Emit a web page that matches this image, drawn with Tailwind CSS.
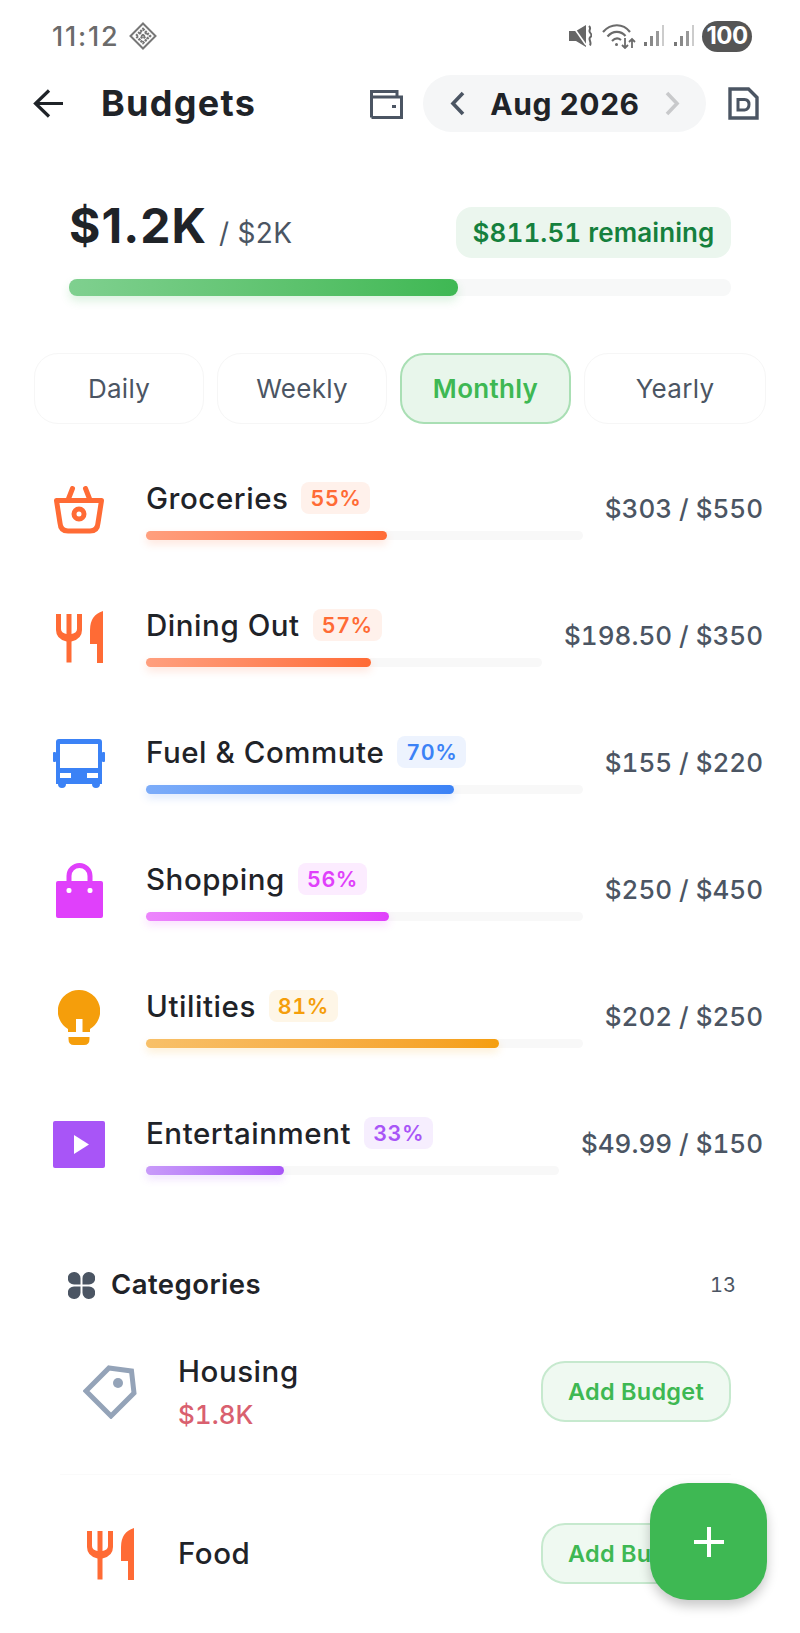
<!DOCTYPE html>
<html lang="en">
<head>
    <meta charset="UTF-8">
    <meta name="viewport" content="width=device-width, initial-scale=1.0">
    <title>Budgets</title>
    <script src="https://cdn.jsdelivr.net/npm/@tailwindcss/browser@4"></script>
</head>
<body class="bg-white font-[Inter,sans-serif] text-[#1f2328]">
<div class="relative w-[800px] h-[1633px] overflow-hidden">

    <!-- status bar -->
    <div class="h-[72px] flex items-center pl-[52px] pr-[48px]">
        <span class="text-[27px] font-medium text-[#6b6b6b] leading-none tracking-[1.8px]">11:12</span>
        <svg class="ml-[10px] w-[28px] h-[28px]" viewBox="0 0 28 28" fill="none" stroke="#777" stroke-width="2">
            <path d="M14 1.500 26.500 14 14 26.500 1.500 14z"/>
            <path d="M14 7 21 14 14 21 7 14z M10.500 10.500 17.500 17.500 M17.500 10.500 10.500 17.500" stroke-width="2.500" stroke-dasharray="2 1"/>
        </svg>
        <div class="ml-auto flex items-center">
            <svg class="w-[23px] h-[22px]" viewBox="0 0 23 22" fill="#666">
                <path d="M0 6H7L17 0V22L7 16H0z"/>
                <path d="M3 0 17 20" stroke="#fff" stroke-width="1.600"/>
                <path d="M20 1c3 3-1 4 1 6.500s2 3 0 5 2 4 0 8" fill="none" stroke="#666" stroke-width="2"/>
            </svg>
            <svg class="ml-[10px] w-[34px] h-[25px]" viewBox="0 0 34 25" fill="none" stroke="#6b6b6b" stroke-width="2.200">
                <path d="M1 8C9 -1 21 -1 28 8"/>
                <path d="M5.500 12.500C11 6.500 18.500 6.500 23.500 12"/>
                <path d="M10 17C13 14 16.500 14 19 16"/>
                <circle cx="14.500" cy="20.500" r="1.500" fill="#6b6b6b" stroke="none"/>
                <path d="M23 14v10M20 21l3 3 3-3M30 24V15M27 18l3-3 3 3" stroke-width="1.800"/>
            </svg>
            <svg class="ml-[7px] w-[21px] h-[22px]" viewBox="0 0 21 22">
                <rect x="1" y="17" width="3" height="4" fill="#777"/>
                <rect x="7" y="11" width="3" height="10" fill="#888"/>
                <rect x="13" y="6" width="3" height="15" fill="#999"/>
                <rect x="19" y="0" width="2" height="21" fill="#ccc"/>
            </svg>
            <svg class="ml-[9px] w-[21px] h-[22px]" viewBox="0 0 21 22">
                <rect x="1" y="17" width="3" height="4" fill="#777"/>
                <rect x="7" y="11" width="3" height="10" fill="#888"/>
                <rect x="13" y="6" width="3" height="15" fill="#999"/>
                <rect x="19" y="0" width="2" height="21" fill="#ccc"/>
            </svg>
            <div class="ml-[8px] w-[50px] h-[31px] rounded-full bg-[#555] text-white text-[24px] font-bold leading-none flex items-center justify-center tracking-[-0.5px]">100</div>
        </div>
    </div>

    <!-- app bar -->
    <div class="h-[57px] mt-[3px] flex items-center pl-[33px] pr-[41px]">
        <svg class="w-[31px] h-[29px]" viewBox="0 0 31 29" fill="none" stroke="#1f2328" stroke-width="3.200">
            <path d="M30 14.500H3M16 1.500 2.500 14.500 16 27.500"/>
        </svg>
        <h1 class="ml-[37px] pb-[2px] text-[36px] font-bold leading-none tracking-[1.3px]">Budgets</h1>
        <svg class="ml-auto w-[33px] h-[30px]" viewBox="0 0 33 30" fill="none" stroke="#4b5563" stroke-width="3">
            <path d="M1.500 28.500V2.500H27V8M1.500 8H31.500V28.500H1.500"/>
            <rect x="22" y="16" width="4" height="3" fill="#4b5563" stroke="none"/>
        </svg>
        <div class="ml-[20px] w-[283px] h-[57px] rounded-full bg-[#f5f6f7] flex items-center pl-[27px] pr-[26px]">
            <svg class="w-[15px] h-[25px]" viewBox="0 0 15 25" fill="none" stroke="#4b5563" stroke-width="3.600">
                <path d="M13 2 3 12.500 13 23"/>
            </svg>
            <span class="mx-auto text-[30px] font-bold leading-none tracking-[0.6px]">Aug 2026</span>
            <svg class="w-[15px] h-[25px]" viewBox="0 0 15 25" fill="none" stroke="#c8c9cb" stroke-width="3.600">
                <path d="M2 2 12 12.500 2 23"/>
            </svg>
        </div>
        <svg class="ml-[22px] w-[31px] h-[33px]" viewBox="0 0 31 33" fill="none" stroke="#4b5563" stroke-width="3.400">
            <path d="M2 2H20.500L29 10.500V31H2z"/>
            <path d="M10 12.500H16.500Q21 12.500 21 17.500T16.500 23H10z" stroke-width="3"/>
        </svg>
    </div>

    <!-- summary -->
    <div class="mt-[75px] mx-[69px]">
        <div class="h-[51px] flex items-center justify-between">
            <div class="flex items-baseline pb-[13px]">
                <span class="text-[48px] font-bold leading-none tracking-[1px]">$1.2K</span>
                <span class="ml-[12px] text-[28px] text-[#4b5563] leading-none tracking-[0.3px]">/ $2K</span>
            </div>
            <div class="w-[275px] h-[51px] rounded-[16px] bg-[#ebf6ee] text-[#15803d] text-[26px] font-semibold tabular-nums flex items-center justify-center tracking-[0.1px]">$811.51 remaining</div>
        </div>
        <div class="mt-[21px] h-[17px] rounded-[8px] bg-[#f7f8f8]">
            <div class="w-[58.7%] h-full rounded-[8px] bg-linear-to-r from-[#7fd08f] to-[#3eb853] shadow-[0_5px_10px_rgba(62,184,83,0.18)]"></div>
        </div>
    </div>

    <!-- period tabs -->
    <div class="mt-[57px] ml-[34px] flex gap-[13px] text-[26px] text-[#4b5563] tracking-[0.3px]">
        <div class="w-[170px] h-[71px] rounded-[24px] border border-[#f6f6f6] flex items-center justify-center">Daily</div>
        <div class="w-[170px] h-[71px] rounded-[24px] border border-[#f6f6f6] flex items-center justify-center">Weekly</div>
        <div class="w-[171px] h-[71px] rounded-[24px] border-2 border-[#a9dfb4] bg-[#e8f6eb] text-[#3eb853] font-semibold flex items-center justify-center">Monthly</div>
        <div class="w-[182px] h-[71px] rounded-[24px] border border-[#f6f6f6] flex items-center justify-center">Yearly</div>
    </div>

    <!-- budgets -->
    <div class="mt-[58px] ml-[53px] mr-[37px] flex flex-col gap-[69px]">

        <div class="h-[58px] flex">
            <div class="w-[93px] pb-[3px] flex items-center">
                <svg class="w-[52px] h-[48px]" viewBox="0 0 52 48" fill="none" stroke="#ff6b35" stroke-width="5" stroke-linecap="round" stroke-linejoin="round">
                    <path d="M3.500 14.500H48.500L45 37Q44.500 45 37 45H15Q7.500 45 7 37Z"/>
                    <path d="M19.500 2.500 15 14M32.500 2.500 37 14"/>
                    <circle cx="26" cy="28" r="5"/>
                </svg>
            </div>
            <div class="flex-1 flex flex-col justify-between">
                <div class="flex items-center">
                    <span class="pt-[2px] text-[29.5px] font-medium leading-none tracking-[0.55px]">Groceries</span>
                    <span class="ml-[13px] w-[69px] h-[32px] rounded-[8px] bg-[#fff1eb] text-[#ff6b35] text-[21.5px] font-semibold tabular-nums tracking-[0.5px] flex items-center justify-center">55%</span>
                </div>
                <div class="h-[9px] rounded-full bg-[#f8f8f8]">
                    <div class="w-[55.1%] h-full rounded-full bg-linear-to-r from-[#ff9f7e] to-[#ff6b35] shadow-[0_4px_8px_rgba(255,107,53,0.18)]"></div>
                </div>
            </div>
            <div class="ml-[22px] pb-[6px] flex items-center text-[26px] font-medium text-[#4b5563] tabular-nums">$303 / $550</div>
        </div>

        <div class="h-[58px] flex">
            <div class="w-[93px] pb-[3px] flex items-center">
                <svg class="ml-[3px] w-[47px] h-[52px]" viewBox="0 0 47 52" fill="#ff6b35">
                    <path d="M0 3h5v15q0 4 5.500 5v-20h5v20q5.500-1 5.500-5v-15h5v16q0 9-10.500 11.500v21h-5v-21q-10.500-2.500-10.500-11.500z"/>
                    <path d="M47 0V52H41V33H34V19Q34 4 47 0z"/>
                </svg>
            </div>
            <div class="flex-1 flex flex-col justify-between">
                <div class="flex items-center">
                    <span class="pt-[2px] text-[29.5px] font-medium leading-none tracking-[0.55px]">Dining Out</span>
                    <span class="ml-[13px] w-[69px] h-[32px] rounded-[8px] bg-[#fff1eb] text-[#ff6b35] text-[21.5px] font-semibold tabular-nums tracking-[0.5px] flex items-center justify-center">57%</span>
                </div>
                <div class="h-[9px] rounded-full bg-[#f8f8f8]">
                    <div class="w-[56.7%] h-full rounded-full bg-linear-to-r from-[#ff9f7e] to-[#ff6b35] shadow-[0_4px_8px_rgba(255,107,53,0.18)]"></div>
                </div>
            </div>
            <div class="ml-[22px] pb-[6px] flex items-center text-[26px] font-medium text-[#4b5563] tabular-nums">$198.50 / $350</div>
        </div>

        <div class="h-[58px] flex">
            <div class="w-[93px] pb-[3px] flex items-center">
                <svg class="w-[52px] h-[49px]" viewBox="0 0 52 49" fill="#3b82f6">
                    <path fill-rule="evenodd" d="M6 0H46Q49 0 49 3V45H3V3Q3 0 6 0zM7 5V29H45V5zM7 34V39H18V34zM34 34V39H45V34z"/>
                    <rect x="0" y="13" width="3" height="10" rx="1"/>
                    <rect x="49" y="13" width="3" height="10" rx="1"/>
                    <path d="M5 43H13V45A4 4 0 0 1 5 45zM39 43H47V45A4 4 0 0 1 39 45z"/>
                </svg>
            </div>
            <div class="flex-1 flex flex-col justify-between">
                <div class="flex items-center">
                    <span class="pt-[2px] text-[29.5px] font-medium leading-none tracking-[0.55px]">Fuel &amp; Commute</span>
                    <span class="ml-[13px] w-[69px] h-[32px] rounded-[8px] bg-[#edf3fe] text-[#3b82f6] text-[21.5px] font-semibold tabular-nums tracking-[0.5px] flex items-center justify-center">70%</span>
                </div>
                <div class="h-[9px] rounded-full bg-[#f8f8f8]">
                    <div class="w-[70.5%] h-full rounded-full bg-linear-to-r from-[#7cacf9] to-[#3b82f6] shadow-[0_4px_8px_rgba(59,130,246,0.18)]"></div>
                </div>
            </div>
            <div class="ml-[22px] pb-[6px] flex items-center text-[26px] font-medium text-[#4b5563] tabular-nums">$155 / $220</div>
        </div>

        <div class="h-[58px] flex">
            <div class="w-[93px] pb-[3px] flex items-center">
                <svg class="ml-[3px] w-[47px] h-[55px]" viewBox="0 0 47 55" fill="#e040fb">
                    <path d="M2 18H45Q47 18 47 20V53Q47 55 45 55H2Q0 55 0 53V20Q0 18 2 18z"/>
                    <path d="M13 20V13A10.500 10.500 0 0 1 34 13V20" fill="none" stroke="#e040fb" stroke-width="5"/>
                    <rect x="10.500" y="25" width="5" height="5" rx="2" fill="#fff"/>
                    <rect x="31.500" y="25" width="5" height="5" rx="2" fill="#fff"/>
                </svg>
            </div>
            <div class="flex-1 flex flex-col justify-between">
                <div class="flex items-center">
                    <span class="pt-[2px] text-[29.5px] font-medium leading-none tracking-[0.55px]">Shopping</span>
                    <span class="ml-[13px] w-[69px] h-[32px] rounded-[8px] bg-[#fcecff] text-[#e040fb] text-[21.5px] font-semibold tabular-nums tracking-[0.5px] flex items-center justify-center">56%</span>
                </div>
                <div class="h-[9px] rounded-full bg-[#f8f8f8]">
                    <div class="w-[55.6%] h-full rounded-full bg-linear-to-r from-[#ec85fc] to-[#e040fb] shadow-[0_4px_8px_rgba(224,64,251,0.18)]"></div>
                </div>
            </div>
            <div class="ml-[22px] pb-[6px] flex items-center text-[26px] font-medium text-[#4b5563] tabular-nums">$250 / $450</div>
        </div>

        <div class="h-[58px] flex">
            <div class="w-[93px] pb-[3px] flex items-center">
                <svg class="ml-[5px] w-[42px] h-[55px]" viewBox="0 0 42 55" fill="#f59e0b">
                    <path d="M21 0A21 21 0 0 1 32 39V42H10V39A21 21 0 0 1 21 0z"/>
                    <rect x="18" y="29" width="6.500" height="13" fill="#fff"/>
                    <path d="M10.500 47H31.500V49Q31.500 55 26 55H16Q10.500 55 10.500 49z"/>
                </svg>
            </div>
            <div class="flex-1 flex flex-col justify-between">
                <div class="flex items-center">
                    <span class="pt-[2px] text-[29.5px] font-medium leading-none tracking-[0.55px]">Utilities</span>
                    <span class="ml-[13px] w-[69px] h-[32px] rounded-[8px] bg-[#fef6e7] text-[#f59e0b] text-[21.5px] font-semibold tabular-nums tracking-[0.5px] flex items-center justify-center">81%</span>
                </div>
                <div class="h-[9px] rounded-full bg-[#f8f8f8]">
                    <div class="w-[80.8%] h-full rounded-full bg-linear-to-r from-[#f8c068] to-[#f59e0b] shadow-[0_4px_8px_rgba(245,158,11,0.18)]"></div>
                </div>
            </div>
            <div class="ml-[22px] pb-[6px] flex items-center text-[26px] font-medium text-[#4b5563] tabular-nums">$202 / $250</div>
        </div>

        <div class="h-[58px] flex">
            <div class="w-[93px] pb-[3px] flex items-center">
                <svg class="w-[52px] h-[47px]" viewBox="0 0 52 47" fill="#a855f7">
                    <rect width="52" height="47" rx="2"/>
                    <path d="M21 14V33L36 23.500z" fill="#fff"/>
                </svg>
            </div>
            <div class="flex-1 flex flex-col justify-between">
                <div class="flex items-center">
                    <span class="pt-[2px] text-[29.5px] font-medium leading-none tracking-[0.55px]">Entertainment</span>
                    <span class="ml-[13px] w-[69px] h-[32px] rounded-[8px] bg-[#f6eefe] text-[#a855f7] text-[21.5px] font-semibold tabular-nums tracking-[0.5px] flex items-center justify-center">33%</span>
                </div>
                <div class="h-[9px] rounded-full bg-[#f8f8f8]">
                    <div class="w-[33.3%] h-full rounded-full bg-linear-to-r from-[#c89af9] to-[#a855f7] shadow-[0_4px_8px_rgba(168,85,247,0.18)]"></div>
                </div>
            </div>
            <div class="ml-[22px] pb-[6px] flex items-center text-[26px] font-medium text-[#4b5563] tabular-nums">$49.99 / $150</div>
        </div>
    </div>

    <!-- categories -->
    <div class="mt-[97px] ml-[68px] mr-[64px] h-[26px] flex items-center">
        <svg class="w-[27px] h-[27px]" viewBox="0 0 27 27" fill="#4b5563">
            <path d="M6 0A6.250 6.250 0 0 1 12.500 6.250V12.500H6A6.250 6.250 0 0 1 6 0z"/>
            <path d="M21 0A6.250 6.250 0 0 0 14.500 6.250V12.500H21A6.250 6.250 0 0 0 21 0z"/>
            <path d="M6 27A6.250 6.250 0 0 0 12.500 20.750V14.500H6A6.250 6.250 0 0 0 6 27z"/>
            <path d="M21 27A6.250 6.250 0 0 1 14.500 20.750V14.500H21A6.250 6.250 0 0 1 21 27z"/>
        </svg>
        <span class="ml-[16px] text-[27.5px] font-semibold leading-none tracking-[0.45px]">Categories</span>
        <span class="ml-auto text-[20px] text-[#4b5563] leading-none tabular-nums">13</span>
    </div>

    <div class="mt-[63px] ml-[60px] mr-[69px]">
        <div class="h-[114px] border-b border-[#fafafa] flex items-start">
            <svg class="ml-[23px] mt-[4px] w-[54px] h-[54px]" viewBox="0 0 54 54" fill="none" stroke="#94a3b8" stroke-width="5">
                <path d="M26 3 48.500 6 51 28 28 51 3 26z"/>
                <circle cx="35" cy="18" r="5" fill="#94a3b8" stroke="none"/>
            </svg>
            <div class="ml-[41px] flex-1">
                <div class="text-[29.5px] font-medium leading-none -mt-[4px] tracking-[0.55px]">Housing</div>
                <div class="mt-[15px] text-[26px] font-medium leading-none text-[#d9606f] tabular-nums">$1.8K</div>
            </div>
            <button class="w-[190px] h-[61px] rounded-[24px] border-2 border-[#c6e9ce] bg-[#eff9f1] text-[#3eb853] text-[23.5px] font-semibold tracking-[0.25px]">Add Budget</button>
        </div>
        <div class="mt-[48px] h-[61px] flex items-center">
            <svg class="ml-[27px] w-[47px] h-[52px]" viewBox="0 0 47 52" fill="#ff6b35">
                <path d="M0 3h5v15q0 4 5.500 5v-20h5v20q5.500-1 5.500-5v-15h5v16q0 9-10.500 11.500v21h-5v-21q-10.500-2.500-10.500-11.500z"/>
                <path d="M47 0V52H41V33H34V19Q34 4 47 0z"/>
            </svg>
            <div class="ml-[44px] flex-1 text-[29.5px] font-medium leading-none tracking-[0.55px]">Food</div>
            <button class="w-[190px] h-[61px] rounded-[24px] border-2 border-[#c6e9ce] bg-[#eff9f1] text-[#3eb853] text-[23.5px] font-semibold tracking-[0.25px]">Add Budget</button>
        </div>
    </div>

    <!-- add button -->
    <button class="absolute left-[650px] top-[1483px] w-[117px] h-[117px] rounded-[38px] bg-[#3eb853] shadow-[0_6px_12px_rgba(0,0,0,0.22)] flex items-center justify-center">
        <svg class="w-[30px] h-[30px]" viewBox="0 0 30 30" fill="none" stroke="#fff" stroke-width="4">
            <path d="M15 0V30M0 15H30"/>
        </svg>
    </button>
</div>
</body>
</html>
